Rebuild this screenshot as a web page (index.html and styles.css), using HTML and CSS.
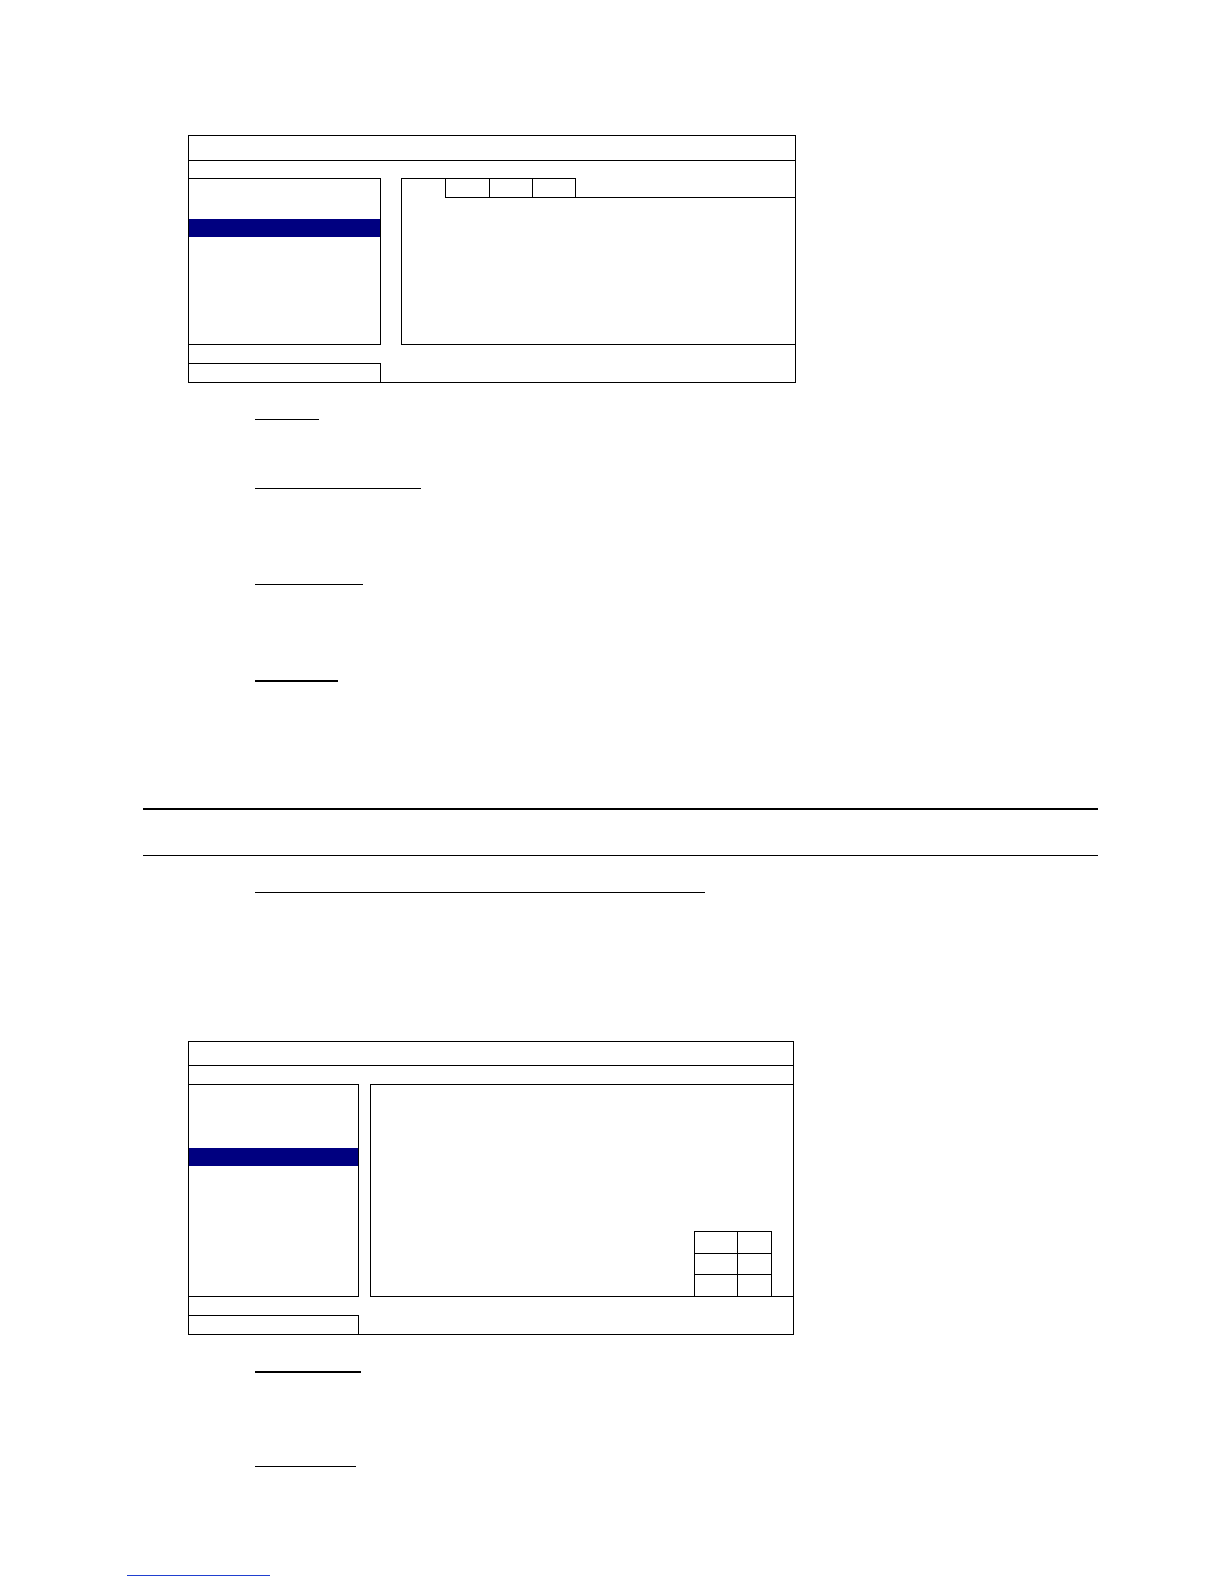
FILE: index.html
```html
<!DOCTYPE html>
<html lang="en">
<head>
<meta charset="utf-8">
<title>Menu layout</title>
<link rel="stylesheet" href="styles.css">
</head>
<body>
<div class="page">
  <div class="osd osd-a">
    <div class="osd-title"></div>
    <div class="osd-main">
      <div class="menu"><div class="menu-sel"></div></div>
      <div class="pane">
        <div class="tabs">
          <div class="tab-on"></div>
          <div class="tab"></div>
          <div class="tab tab-mid"></div>
          <div class="tab tab-last"></div>
          <div class="tab-fill"></div>
        </div>
      </div>
    </div>
    <div class="osd-foot"></div>
  </div>

  <div class="u u1"></div>
  <div class="u u2"></div>
  <div class="u u3"></div>
  <div class="u u4"></div>

  <div class="hr hr1"></div>
  <div class="hr hr2"></div>

  <div class="u u5"></div>

  <div class="osd osd-b">
    <div class="osd-title"></div>
    <div class="osd-main">
      <div class="menu"><div class="menu-sel"></div></div>
      <div class="pane">
        <div class="grid">
          <div class="cell"></div><div class="cell cell-r"></div>
          <div class="cell"></div><div class="cell cell-r"></div>
          <div class="cell"></div><div class="cell cell-r"></div>
        </div>
      </div>
    </div>
    <div class="osd-foot"></div>
  </div>

  <div class="u u6"></div>
  <div class="u u7"></div>

  <div class="link"></div>
</div>
</body>
</html>
```

FILE: styles.css
```css
* { box-sizing: border-box; }
html, body { margin: 0; padding: 0; background: #fff; }
body { font-family: "Liberation Serif", serif; }

.page { padding-top: 135px; width: 1224px; }

/* OSD screens */
.osd {
  margin-left: 188px;
  border: 1px solid #000;
  display: flex;
  flex-direction: column;
}
.osd-a { width: 608px; height: 248px; }
.osd-b { width: 606px; height: 294px; margin-top: 148px; }

.osd-title { border-bottom: 1px solid #000; flex: none; }
.osd-a .osd-title { height: 25px; }
.osd-b .osd-title { height: 24px; }

.osd-main { display: flex; flex: none; }
.osd-a .osd-main { margin-top: 17px; height: 167px; }
.osd-b .osd-main { margin-top: 18px; height: 213px; }

.menu {
  border-top: 1px solid #000;
  border-right: 1px solid #000;
  border-bottom: 1px solid #000;
  flex: none;
}
.osd-a .menu { width: 192px; }
.osd-b .menu { width: 170px; }

.menu-sel { height: 18px; background: #000080; }
.osd-a .menu-sel { margin-top: 40px; }
.osd-b .menu-sel { margin-top: 63px; }

.pane {
  flex: 1;
  border-left: 1px solid #000;
  border-bottom: 1px solid #000;
}
.osd-a .pane { margin-left: 20px; }
.osd-b .pane {
  margin-left: 11px;
  border-top: 1px solid #000;
  display: flex;
  flex-direction: column;
  justify-content: flex-end;
  align-items: flex-end;
  padding-right: 21px;
}

/* tabs */
.tabs { display: flex; height: 20px; }
.tab-on { width: 43px; border-top: 1px solid #000; }
.tab {
  width: 44px;
  border-top: 1px solid #000;
  border-left: 1px solid #000;
  border-bottom: 1px solid #000;
}
.tab-mid { width: 43px; }
.tab-last { width: 44px; border-right: 1px solid #000; }
.tab-fill { flex: 1; border-bottom: 1px solid #000; }

/* small table */
.grid {
  display: grid;
  grid-template-columns: 43px 35px;
  grid-template-rows: 22px 21px 22px;
}
.cell { border-top: 1px solid #000; border-left: 1px solid #000; }
.cell-r { border-right: 1px solid #000; }

.osd-foot {
  border-top: 1px solid #000;
  border-right: 1px solid #000;
  height: 19px;
  flex: none;
}
.osd-a .osd-foot { width: 192px; margin-top: 18px; }
.osd-b .osd-foot { width: 170px; margin-top: 18px; }

/* underlined headings */
.u { margin-left: 255px; height: 0; border-top: 1px solid #000; }
.u1 { width: 64px; margin-top: 36px; }
.u2 { width: 166px; margin-top: 68px; }
.u3 { width: 108px; margin-top: 95px; }
.u4 { width: 83px; margin-top: 95px; border-top-width: 2px; }
.u5 { width: 450px; margin-top: 36px; }
.u6 { width: 106px; margin-top: 36px; border-top-width: 2px; }
.u7 { width: 101px; margin-top: 93px; }

/* horizontal rules */
.hr { margin-left: 143px; width: 955px; height: 0; border-top: 1px solid #000; }
.hr1 { margin-top: 126px; border-top-width: 2px; }
.hr2 { margin-top: 45px; }

.link {
  margin-left: 127px;
  margin-top: 108px;
  width: 143px;
  height: 0;
  border-top: 1px solid #2040d0;
}
```
